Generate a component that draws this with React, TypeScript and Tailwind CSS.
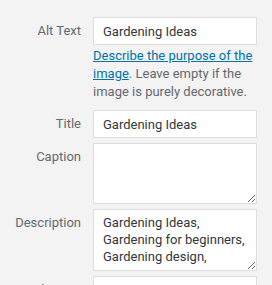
import React from "react";

export default function App() {
  const label = "w-[81px] shrink-0 text-right text-[13px] text-[#646970]";
  const field =
    "ml-[12px] w-[164px] border border-[#dddddd] bg-white text-[13px] text-[#32373c] outline-none font-['Roboto',sans-serif]";
  return (
    <div className="h-[285px] w-[272px] overflow-hidden bg-[#f3f3f3] pt-[17px] font-['Roboto',sans-serif]">
      <div className="flex items-start">
        <label className={`${label} leading-[28px]`}>Alt Text</label>
        <div className="flex flex-col">
          <input
            className={`${field} h-[28px] px-[9px]`}
            defaultValue="Gardening Ideas"
            readOnly
          />
          <p className="ml-[12px] mt-[2px] w-[164px] text-[13px] leading-[18px] text-[#646970]">
            <a href="#" className="text-[#0073aa] underline">
              Describe the purpose of the
              <br />
              image
            </a>
            . Leave empty if the
            <br />
            image is purely decorative.
          </p>
        </div>
      </div>

      <div className="mt-[9px] flex items-start">
        <label className={`${label} leading-[28px]`}>Title</label>
        <input
          className={`${field} h-[28px] px-[9px]`}
          defaultValue="Gardening Ideas"
          readOnly
        />
      </div>

      <div className="mt-[5px] flex items-start">
        <label className={`${label} pt-[6px] leading-[16px]`}>Caption</label>
        <textarea className={`${field} h-[61px] px-[9px] pt-[4px] leading-[17px]`} readOnly />
      </div>

      <div className="mt-[5px] flex items-start">
        <label className={`${label} pt-[6px] leading-[16px]`}>Description</label>
        <textarea
          className={`${field} h-[62px] resize-y px-[9px] pt-[4px] leading-[17px]`}
          defaultValue={"Gardening Ideas, Gardening for beginners, Gardening design,"}
          readOnly
        />
      </div>

      <div className="mt-[5px] flex items-start">
        <label className={`${label} pt-[6px] leading-[16px]`}>File URL:</label>
        <input
          className={`${field} h-[28px] bg-[#ebebeb] px-[9px] text-[#646970]`}
          defaultValue="https://example.com/wp-content/uploads/gardening-ideas.jpg"
          readOnly
        />
      </div>
    </div>
  );
}
